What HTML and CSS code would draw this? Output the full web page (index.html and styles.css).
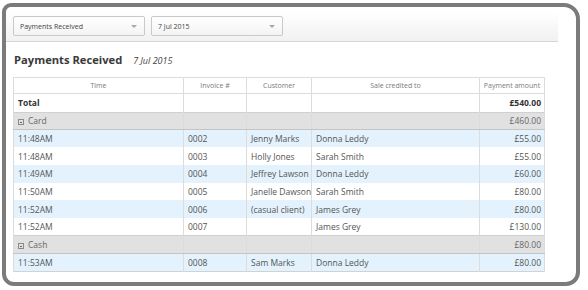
FILE: index.html
```html
<!DOCTYPE html>
<html lang="en">
<head>
    <meta charset="UTF-8">
    <title>Payments Received</title>
    <link rel="stylesheet" href="styles.css">
</head>
<body>
    <div class="frame">
        <!-- Toolbar -->
        <div class="toolbar">
            <div class="select">
                <span>Payments Received</span>
                <span class="caret"></span>
            </div>
            <div class="select">
                <span>7 Jul 2015</span>
                <span class="caret"></span>
            </div>
        </div>

        <div class="content">
            <h1 class="report-title">Payments Received <span class="report-date">7 Jul 2015</span></h1>

            <table class="report">
                <colgroup>
                    <col class="col-time">
                    <col class="col-invoice">
                    <col class="col-customer">
                    <col class="col-credit">
                    <col class="col-amount">
                </colgroup>
                <thead>
                    <tr>
                        <th>Time</th>
                        <th>Invoice #</th>
                        <th>Customer</th>
                        <th>Sale credited to</th>
                        <th>Payment amount</th>
                    </tr>
                </thead>
                <tbody>
                    <tr class="row-total">
                        <td>Total</td><td></td><td></td><td></td><td class="amount">£540.00</td>
                    </tr>
                    <tr class="row-group">
                        <td><span class="toggle"></span>Card</td><td></td><td></td><td></td><td class="amount">£460.00</td>
                    </tr>
                    <tr class="row-a">
                        <td>11:48AM</td><td>0002</td><td>Jenny Marks</td><td>Donna Leddy</td><td class="amount">£55.00</td>
                    </tr>
                    <tr class="row-b">
                        <td>11:48AM</td><td>0003</td><td>Holly Jones</td><td>Sarah Smith</td><td class="amount">£55.00</td>
                    </tr>
                    <tr class="row-a">
                        <td>11:49AM</td><td>0004</td><td>Jeffrey Lawson</td><td>Donna Leddy</td><td class="amount">£60.00</td>
                    </tr>
                    <tr class="row-b">
                        <td>11:50AM</td><td>0005</td><td>Janelle Dawson</td><td>Sarah Smith</td><td class="amount">£80.00</td>
                    </tr>
                    <tr class="row-a">
                        <td>11:52AM</td><td>0006</td><td>(casual client)</td><td>James Grey</td><td class="amount">£80.00</td>
                    </tr>
                    <tr class="row-b">
                        <td>11:52AM</td><td>0007</td><td></td><td>James Grey</td><td class="amount">£130.00</td>
                    </tr>
                    <tr class="row-group">
                        <td><span class="toggle"></span>Cash</td><td></td><td></td><td></td><td class="amount">£80.00</td>
                    </tr>
                    <tr class="row-a">
                        <td>11:53AM</td><td>0008</td><td>Sam Marks</td><td>Donna Leddy</td><td class="amount">£80.00</td>
                    </tr>
                </tbody>
            </table>
        </div>
    </div>
</body>
</html>
```

FILE: styles.css
```css
* {
    margin: 0;
    padding: 0;
    box-sizing: border-box;
}

body {
    font-family: 'Open Sans', 'DejaVu Sans', sans-serif;
    background-color: #ffffff;
    color: #555;
}

.frame {
    width: 578px;
    height: 283px;
    margin: 3px 0 0 2px;
    border: 4px solid #7b7b7b;
    border-radius: 9px 16px 14px 12px;
    background-color: #ffffff;
    overflow: hidden;
}

/* Toolbar */
.toolbar {
    width: 552px;
    height: 30px;
    margin-top: 5px;
    padding: 4px 0 0 7px;
    display: flex;
    gap: 6px;
    background: linear-gradient(to bottom, #ffffff, #f1f1f1);
    border-bottom: 1px solid #d6d6d6;
}

.select {
    width: 132px;
    height: 20px;
    padding: 0 6px;
    display: flex;
    align-items: center;
    justify-content: space-between;
    border: 1px solid #c9c9c9;
    border-radius: 2px;
    background: linear-gradient(to bottom, #ffffff, #f4f4f4);
    font-size: 7px;
    color: #444;
}

.caret {
    width: 0;
    height: 0;
    margin-right: 1px;
    border-left: 3px solid transparent;
    border-right: 3px solid transparent;
    border-top: 3px solid #a8a8a8;
}

/* Report */
.content {
    padding: 0 7px;
}

.report-title {
    margin-top: 11px;
    padding-left: 1px;
    font-size: 11.2px;
    line-height: 14px;
    font-weight: 700;
    color: #3a3a3a;
}

.report-date {
    margin-left: 8px;
    font-size: 9px;
    font-weight: 400;
    font-style: italic;
    color: #444;
}

.report {
    width: 531px;
    margin-top: 9px;
    table-layout: fixed;
    border-collapse: collapse;
    border: 1px solid #d2d2d2;
    font-size: 8.5px;
}

.col-time { width: 170px; }
.col-invoice { width: 63px; }
.col-customer { width: 65px; }
.col-credit { width: 168px; }
.col-amount { width: 65px; }

.report th {
    height: 16px;
    font-size: 7px;
    font-weight: 400;
    color: #7a7a7a;
    text-align: center;
    background-color: #ffffff;
    border: 1px solid #dcdcdc;
}

.report td {
    height: 17.7px;
    padding: 0 3px 0 4px;
    white-space: nowrap;
    overflow: hidden;
    border-left: 1px solid #dcdcdc;
    border-right: 1px solid #dcdcdc;
    color: #555;
}

.report td.amount {
    text-align: right;
    padding-right: 3px;
}

.row-total td {
    height: 18.5px;
    font-weight: 700;
    color: #333;
    background-color: #ffffff;
}

.row-group td {
    background-color: #e1e1e1;
    border-top: 1px solid #d0d0d0;
    border-bottom: 1px solid #c4c4c4;
    color: #666;
}

.row-a td {
    background-color: #e3f2fd;
}

.row-b td {
    background-color: #ffffff;
}

.toggle {
    display: inline-block;
    position: relative;
    width: 6px;
    height: 6px;
    margin: 0 4px 0 0;
    border: 1px solid #8a8a8a;
    vertical-align: -1px;
}

.toggle::after {
    content: '';
    position: absolute;
    left: 1px;
    top: 1.5px;
    width: 2px;
    height: 1px;
    background-color: #666;
}
```
